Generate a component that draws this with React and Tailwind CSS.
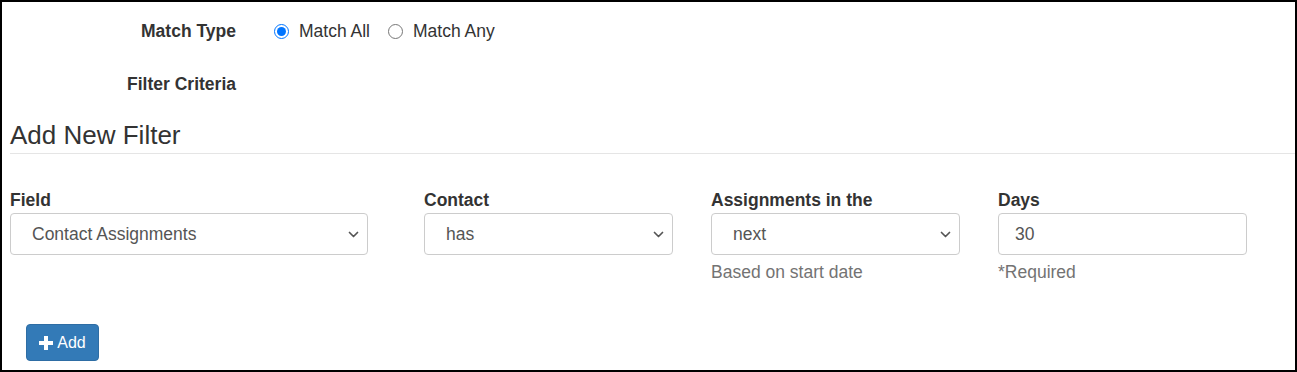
import React from 'react';

const font = { fontFamily: '"Liberation Sans", Arial, sans-serif' };

function Chevron() {
  return (
    <svg width="11" height="7" viewBox="0 0 11 7" className="shrink-0">
      <path d="M1.5 1.5 L5.5 5.5 L9.5 1.5" fill="none" stroke="#555" strokeWidth="1.7" strokeLinecap="round" strokeLinejoin="round" />
    </svg>
  );
}

function SelectBox({ value, width }) {
  return (
    <div className={`${width} h-[42px] flex items-center justify-between pl-[21px] pr-[8px] border border-[#cccccc] rounded-[4px] bg-white text-[17.5px] text-[#555555]`}>
      <span>{value}</span>
      <Chevron />
    </div>
  );
}

function Field({ label, children, help, width }) {
  return (
    <div className={`${width} shrink-0`}>
      <div className="text-[17.5px] leading-[20px] font-bold text-[#333333] mb-[3px]">{label}</div>
      {children}
      {help && <div className="mt-[7px] text-[17.5px] leading-[20px] text-[#737373]">{help}</div>}
    </div>
  );
}

export default function App() {
  return (
    <div style={font} className="w-[1297px] h-[372px] border-2 border-black bg-white text-[#333333] overflow-hidden">
      {/* match type */}
      <div className="h-[58px] flex items-center">
        <div className="w-[234px] text-right text-[17.5px] font-bold">Match Type</div>
        <label className="ml-[38px] flex items-center text-[17.5px]">
          <input type="radio" name="match" defaultChecked className="w-[15px] h-[15px] m-0" />
          <span className="ml-[10px]">Match All</span>
        </label>
        <label className="ml-[18px] flex items-center text-[17.5px]">
          <input type="radio" name="match" className="w-[15px] h-[15px] m-0" />
          <span className="ml-[10px]">Match Any</span>
        </label>
      </div>
      <div className="h-[48px] flex items-center">
        <div className="w-[234px] text-right text-[17.5px] font-bold">Filter Criteria</div>
      </div>

      {/* add new filter */}
      <div className="ml-[8px] pt-[14px] pb-[5px] border-b border-[#e5e5e5]">
        <h3 className="text-[26px] leading-[26px] text-[#333333]">Add New Filter</h3>
      </div>

      <div className="mt-[36px] pl-[8px] flex">
        <Field label="Field" width="w-[414px]">
          <SelectBox value="Contact Assignments" width="w-[358px]" />
        </Field>
        <Field label="Contact" width="w-[287px]">
          <SelectBox value="has" width="w-[249px]" />
        </Field>
        <Field label="Assignments in the" width="w-[287px]" help="Based on start date">
          <SelectBox value="next" width="w-[249px]" />
        </Field>
        <Field label="Days" width="w-[287px]" help="*Required">
          <div className="w-[249px] h-[42px] flex items-center pl-[16px] border border-[#cccccc] rounded-[4px] bg-white text-[17.5px] text-[#555555]">
            30
          </div>
        </Field>
      </div>

      <div className="mt-[42px] ml-[24px]">
        <button className="h-[37px] w-[73px] flex items-center justify-center gap-[4px] bg-[#337ab7] border border-[#2e6da4] rounded-[4px] text-white text-[16px]">
          <svg width="14" height="14" viewBox="0 0 14 14">
            <path d="M5 0h4v5h5v4H9v5H5V9H0V5h5z" fill="white" />
          </svg>
          <span>Add</span>
        </button>
      </div>
    </div>
  );
}
